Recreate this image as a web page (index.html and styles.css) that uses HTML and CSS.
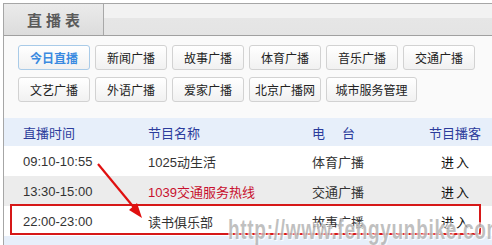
FILE: index.html
```html
<!DOCTYPE html>
<html lang="zh">
<head>
<meta charset="utf-8">
<link rel="stylesheet" href="styles.css">
</head>
<body>
<div class="panel">
  <div class="head">
    <div class="tab">直播表</div>
    <div class="head-rest"></div>
  </div>
  <div class="btns">
    <span class="btn active">今日直播</span>
    <span class="btn">新闻广播</span>
    <span class="btn">故事广播</span>
    <span class="btn">体育广播</span>
    <span class="btn">音乐广播</span>
    <span class="btn">交通广播</span>
    <span class="btn">文艺广播</span>
    <span class="btn">外语广播</span>
    <span class="btn">爱家广播</span>
    <span class="btn">北京广播网</span>
    <span class="btn wide">城市服务管理</span>
  </div>
  <div class="table">
    <div class="row th">
      <span>直播时间</span><span>节目名称</span><span>电<i class="sp"></i>台</span><span class="c4">节目播客</span>
    </div>
    <div class="row">
      <span>09:10-10:55</span><span>1025动生活</span><span>体育广播</span><span class="c4 go">进入</span>
    </div>
    <div class="row alt">
      <span>13:30-15:00</span><span class="hot">1039交通服务热线</span><span>交通广播</span><span class="c4 go">进入</span>
    </div>
    <div class="row">
      <span>22:00-23:00</span><span>读书俱乐部</span><span>故事广播</span><span class="c4 go">进入</span>
    </div>
    <div class="foot"></div>
  </div>
</div>
<div class="mark-box"></div>
<svg class="arrow" width="492" height="245" viewBox="0 0 492 245">
  <line x1="98" y1="164" x2="136" y2="210" stroke="#e01010" stroke-width="2.2"/>
  <polygon points="142,218 129,210 137,203" fill="#e01010"/>
</svg>
<div class="watermark">http://www.fengyunbike.com</div>
</body>
</html>
```
FILE: styles.css
```css
html, body {
  margin: 0;
  padding: 0;
  background: #ffffff;
  overflow: hidden;
}
body {
  width: 492px;
  height: 245px;
  position: relative;
  font-family: "Liberation Sans", "Noto Sans CJK SC", sans-serif;
  font-size: 13px;
  color: #333;
}
.panel {
  margin: 3px 0 0 3px;
  border-top: 1px solid #a6a6a6;
  border-left: 1px solid #a6a6a6;
  background: #fafafa;
  height: 241px;
  overflow: hidden;
}
.head {
  display: flex;
  height: 31px;
  border-bottom: 1px solid #a0a0a0;
}
.tab {
  width: 100px;
  border-right: 1px solid #a8a8a8;
  background: linear-gradient(#ebebeb, #dcdcdc);
  display: flex;
  align-items: center;
  justify-content: center;
  font-size: 15px;
  font-weight: bold;
  letter-spacing: 4px;
  padding-left: 4px;
  box-sizing: border-box;
  color: #5a5a5a;
}
.head-rest {
  flex: 1;
  background: linear-gradient(#f2f2f2 0, #f2f2f2 45%, #e6e6e6 45%, #e4e4e4 100%);
}
.btns {
  display: flex;
  flex-wrap: wrap;
  column-gap: 5px;
  row-gap: 7px;
  padding: 9px 0 16px 14px;
  width: 488px;
  box-sizing: border-box;
}
.btn {
  box-sizing: border-box;
  width: 72px;
  height: 25px;
  padding: 0;
  border: 1px solid #d2d2d2;
  border-radius: 3px;
  background: linear-gradient(#ffffff, #f1f1f1);
  font-size: 12px;
  color: #222;
  display: flex;
  align-items: center;
  justify-content: center;
  white-space: nowrap;
}
.btn.wide {
  width: 91px;
}
.btn.active {
  border-color: #a9cbe8;
  color: #3a8ae0;
  font-weight: bold;
}
.table {
  width: 488px;
}
.row {
  display: grid;
  grid-template-columns: 125px 164px 106px 1fr;
  align-items: center;
  height: 30px;
  padding-left: 19px;
  background: #ffffff;
}
.row.th {
  height: 28px;
  background: #e7effa;
  color: #2c3c9c;
}
.row.alt {
  background: #ececec;
}
.c4 {
  text-align: center;
}
.go {
  letter-spacing: 2px;
  padding-left: 2px;
  color: #111;
}
.hot {
  color: #c8102e;
}
.sp {
  display: inline-block;
  width: 17px;
}
.foot {
  height: 12px;
  background: #e7effa;
}
.mark-box {
  position: absolute;
  left: 10px;
  top: 204px;
  width: 471px;
  height: 31px;
  border: 2px solid #d61818;
  box-sizing: border-box;
}
.arrow {
  position: absolute;
  left: 0;
  top: 0;
  pointer-events: none;
}
.watermark {
  position: absolute;
  left: 228px;
  top: 213px;
  font-family: "Liberation Sans Narrow", "Liberation Sans", sans-serif;
  font-weight: bold;
  font-size: 19px;
  letter-spacing: 0.7px;
  color: rgba(150, 150, 150, 0.6);
  text-shadow: 1px 1px 0 rgba(255, 255, 255, 0.8), -1px -1px 0 rgba(255, 255, 255, 0.6);
  transform: scaleY(1.5);
  transform-origin: top left;
  white-space: nowrap;
}
```
